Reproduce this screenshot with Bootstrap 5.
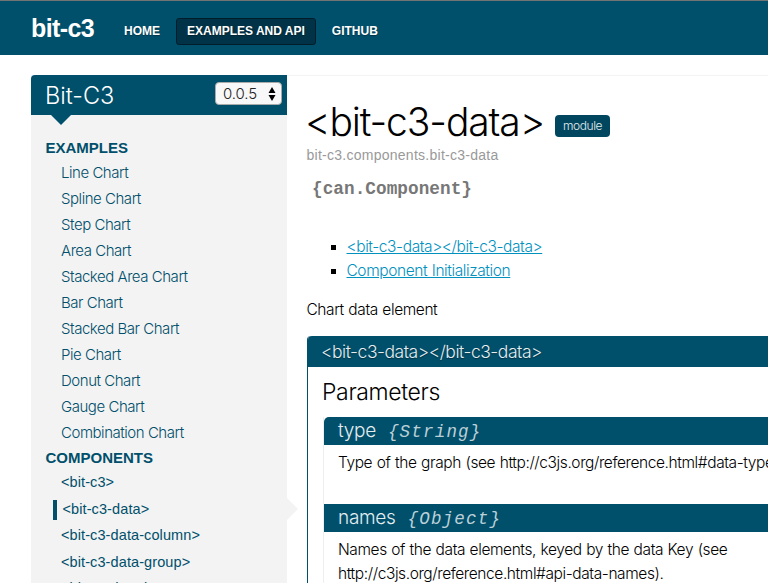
<!DOCTYPE html>
<html lang="en">
<head>
<meta charset="utf-8">
<title>bit-c3</title>
<link href="https://cdn.jsdelivr.net/npm/bootstrap@5.3.0/dist/css/bootstrap.min.css" rel="stylesheet">
<style>
:root{--teal:#004f6b}
body{font:300 15.5px/24px Inter,"Liberation Sans",sans-serif;color:#000;height:583px;overflow:hidden;letter-spacing:-.41px;word-spacing:.6px}
.topbar{height:55px;background:var(--teal);border-top:1px solid #737373;padding-left:31px;font-family:"Liberation Sans",sans-serif;letter-spacing:0;word-spacing:0}
.brand{font-size:25px;line-height:28px;font-weight:700;letter-spacing:-.6px;width:82px}
.topbar .nav{margin-top:6px;gap:5px}
.topbar .nav-link{font-size:12px;line-height:15px;font-weight:700;color:#fff;padding:5px 10px;border:1px solid transparent;height:27px;white-space:nowrap;text-shadow:0 1px 1px #00000055}
.topbar .nav-link.active{background:#003347;border-color:#001d29;border-radius:3px}
.layout{padding:20px 0 0 31px}
.side{width:256px;background:#f3f3f3;height:508px;word-spacing:0}
.side-head{height:40px;background:var(--teal);border-radius:4px 0 0 0;padding:0 5px 0 14px;color:#fff}
.side-head:after{content:"";position:absolute;left:20px;top:40px;border:10px solid transparent;border-top-color:var(--teal);border-bottom:0}
.side-title{font-size:23.5px;line-height:41px;letter-spacing:0}
.ver{width:67px;height:23px;margin-top:7px;border-radius:4px;border:1px solid #aaa;background:#f8f8f8;color:#222;font-size:15px;line-height:21px;padding:0 5px 0 7px;letter-spacing:-.1px}
.grp{font:700 15px/24px "Liberation Sans",sans-serif;letter-spacing:0;color:var(--teal);padding-left:14.5px}
.grp:first-child{padding-top:21px}
.side-list a{display:block;color:var(--teal);text-decoration:none;font-size:15px;letter-spacing:-.46px;line-height:26px;padding-left:30px}
.side-list .comp{margin-top:-.6px}
.side-list .comp a{font-family:"Liberation Sans",sans-serif;font-size:14.5px;font-weight:400;line-height:26.4px;letter-spacing:.1px}
.side-list .comp a.here{padding-left:31.5px}
.here:before{content:"";position:absolute;left:22px;top:4px;width:4px;height:20px;background:var(--teal)}
.here:after{content:"";position:absolute;left:256px;top:2px;border:11px solid transparent;border-left-color:#f3f3f3;border-right:0}
.main{border-top:1px solid #f3f3f3;padding-left:20px;height:508px;overflow:hidden}
.title-row{padding-top:24px}
h1{font-size:39px;line-height:44px;font-weight:300;letter-spacing:-1.1px;margin:0 0 0 -2px}
.tag{width:55px;height:22px;margin:15px 0 0 11px;border-radius:4px;background:#00465f;color:#e4edf0;font-size:12px;line-height:21px}
.path{font:400 14px/18px "Liberation Sans",sans-serif;color:#999;letter-spacing:.26px;margin:2px 0 0 -.5px}
.sig{font:700 17.7px/20px "Liberation Mono",monospace;color:#777;letter-spacing:.05px;margin:15px 0 0 5px}
.toc{list-style:none;padding-left:23.5px;margin:36px 0 0}
.toc li:before{content:"";width:5px;height:5px;background:#000;margin-right:11px}
.toc a{color:#0091bf}
.intro{margin:15px 0 14px -.5px}
.panel{border-left:1px solid var(--teal);border-radius:4px 0 0 0;width:600px}
.panel-head{background:var(--teal);color:#e4edf0;height:31px;line-height:31px;font-size:17.5px;letter-spacing:-.46px;border-radius:4px 0 0 0;padding-left:13px;text-shadow:0 1px 1px #00000066}
h2{font-size:23px;line-height:30px;font-weight:300;letter-spacing:-.35px;margin:10px 0 10px 14px}
.params{margin-left:15px;border-left:1px solid #eee}
.par-head{background:var(--teal);color:#e4edf0;height:28px;line-height:28px;font-size:19px;letter-spacing:-.3px;padding-left:14px}
.par-head:first-child{border-radius:5px 0 0 0}
.par-head i{font:italic 400 17.5px/28px "Liberation Mono",monospace;letter-spacing:1.2px;word-spacing:0;color:#bcd0d8;margin-left:12px}
.par-body{padding:6px 0 0 14px;height:59px;white-space:nowrap}
</style>
<script src="https://cdn.jsdelivr.net/npm/bootstrap@5.3.0/dist/js/bootstrap.bundle.min.js"></script>
</head>
<body>
<nav class="topbar d-flex align-items-center">
  <div class="brand text-white">bit-c3</div>
  <div class="nav flex-nowrap">
    <a class="nav-link" href="#">HOME</a>
    <a class="nav-link active" href="#">EXAMPLES AND API</a>
    <a class="nav-link" href="#">GITHUB</a>
  </div>
</nav>
<div class="layout d-flex">
  <aside class="side flex-shrink-0">
    <div class="side-head position-relative d-flex justify-content-between">
      <span class="side-title">Bit-C3</span>
      <div class="ver d-flex justify-content-between align-items-center"><span>0.0.5</span>
        <svg width="8" height="14" viewBox="0 0 8 14"><path d="M4 0 7.5 6h-7zM.5 8h7L4 14z" fill="#000"/></svg></div>
    </div>
    <div class="side-list">
      <div class="grp">EXAMPLES</div>
      <a href="#">Line Chart</a>
      <a href="#">Spline Chart</a>
      <a href="#">Step Chart</a>
      <a href="#">Area Chart</a>
      <a href="#">Stacked Area Chart</a>
      <a href="#">Bar Chart</a>
      <a href="#">Stacked Bar Chart</a>
      <a href="#">Pie Chart</a>
      <a href="#">Donut Chart</a>
      <a href="#">Gauge Chart</a>
      <a href="#">Combination Chart</a>
      <div class="grp">COMPONENTS</div>
      <div class="comp">
        <a href="#">&lt;bit-c3&gt;</a>
        <a href="#" class="here position-relative">&lt;bit-c3-data&gt;</a>
        <a href="#">&lt;bit-c3-data-column&gt;</a>
        <a href="#">&lt;bit-c3-data-group&gt;</a>
        <a href="#">&lt;bit-c3-data-item&gt;</a>
      </div>
    </div>
  </aside>
  <main class="main flex-grow-1">
    <div class="title-row d-flex"><h1>&lt;bit-c3-data&gt;</h1><div class="tag text-center">module</div></div>
    <div class="path">bit-c3.components.bit-c3-data</div>
    <div class="sig">{can.Component}</div>
    <ul class="toc">
      <li class="d-flex align-items-center"><a href="#">&lt;bit-c3-data&gt;&lt;/bit-c3-data&gt;</a></li>
      <li class="d-flex align-items-center"><a href="#">Component Initialization</a></li>
    </ul>
    <p class="intro">Chart data element</p>
    <section class="panel">
      <div class="panel-head">&lt;bit-c3-data&gt;&lt;/bit-c3-data&gt;</div>
      <h2>Parameters</h2>
      <div class="params">
        <div class="par-head">type<i>{String}</i></div>
        <div class="par-body">Type of the graph (see http://c3js.org/reference.html#data-type)</div>
        <div class="par-head">names<i>{Object}</i></div>
        <div class="par-body">Names of the data elements, keyed by the data Key (see<br>http://c3js.org/reference.html#api-data-names).</div>
      </div>
    </section>
  </main>
</div>
</body>
</html>
